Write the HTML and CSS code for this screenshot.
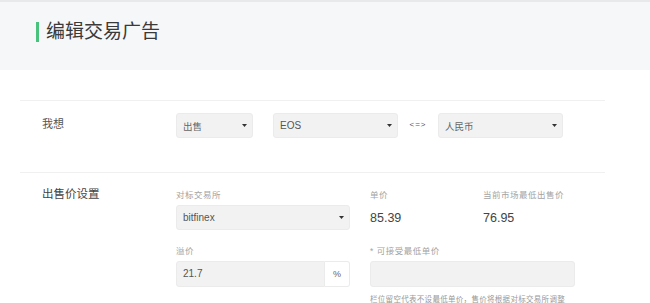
FILE: index.html
```html
<!DOCTYPE html>
<html lang="zh">
<head>
  <meta charset="UTF-8">
  <title>编辑交易广告</title>
  <link rel="stylesheet" href="styles.css">
</head>
<body>

  <div class="page-head">
    <h1 class="page-title">编辑交易广告</h1>
  </div>

  <div class="form">
    <!-- 我想 -->
    <div class="row row-want">
      <div class="row-label">我想</div>
      <div class="row-body inline">
        <div class="select sel-small">
          <span>出售</span>
          <svg class="caret" width="5" height="3" viewBox="0 0 5 3"><path d="M0 0h5L2.5 3z"/></svg>
        </div>
        <div class="select sel-wide">
          <span class="latin">EOS</span>
          <svg class="caret" width="5" height="3" viewBox="0 0 5 3"><path d="M0 0h5L2.5 3z"/></svg>
        </div>
        <span class="swap">&lt;=&gt;</span>
        <div class="select sel-wide">
          <span>人民币</span>
          <svg class="caret" width="5" height="3" viewBox="0 0 5 3"><path d="M0 0h5L2.5 3z"/></svg>
        </div>
      </div>
    </div>

    <!-- 出售价设置 -->
    <div class="row row-price">
      <div class="row-label">出售价设置</div>
      <div class="row-body grid">
        <div class="field">
          <div class="field-label">对标交易所</div>
          <div class="select sel-full">
            <span class="latin">bitfinex</span>
            <svg class="caret" width="5" height="3" viewBox="0 0 5 3"><path d="M0 0h5L2.5 3z"/></svg>
          </div>
        </div>
        <div class="field">
          <div class="field-label">单价</div>
          <div class="value">85.39</div>
        </div>
        <div class="field">
          <div class="field-label">当前市场最低出售价</div>
          <div class="value">76.95</div>
        </div>

        <div class="field">
          <div class="field-label">溢价</div>
          <div class="input-group">
            <div class="input latin">21.7</div>
            <div class="addon">%</div>
          </div>
        </div>
        <div class="field span2">
          <div class="field-label">* 可接受最低单价</div>
          <div class="input input-min"></div>
          <div class="hint">栏位留空代表不设最低单价，售价将根据对标交易所调整</div>
        </div>
      </div>
    </div>
  </div>

</body>
</html>
```

FILE: styles.css
```css
body {
  margin: 0;
  font-family: "Liberation Sans", "Noto Sans CJK SC", sans-serif;
  color: #333;
  background: #fff;
}

.page-head {
  border-top: 2px solid #e8e9eb;
  background: #f6f7f9;
  height: 70px;
  padding: 20px 0 0 36px;
  box-sizing: border-box;
}

.page-title {
  margin: 0;
  border-left: 3px solid #49c27d;
  padding-left: 7px;
  font-size: 19px;
  font-weight: normal;
  line-height: 20px;
  color: #3a3a3a;
}

.form {
  margin: 30px 0 0 20px;
  width: 585px;
}

.row {
  display: flex;
  align-items: flex-start;
  border-top: 1px solid #f0f0f0;
}

.row-want {
  height: 72px;
  padding-top: 12px;
  box-sizing: border-box;
}

.row-label {
  width: 156px;
  padding-left: 22px;
  box-sizing: border-box;
  font-size: 11px;
  line-height: 14px;
  color: #555;
}

.row-want .row-label {
  padding-top: 4px;
}

.row-price .row-label {
  margin-top: -2px;
  font-size: 11.5px;
  color: #444;
}

.inline {
  display: flex;
  align-items: center;
}

.select {
  height: 25px;
  box-sizing: border-box;
  background: #f2f2f2;
  border: 1px solid #ebebeb;
  border-radius: 3px;
  display: flex;
  align-items: center;
  justify-content: space-between;
  padding: 0 5px 0 6px;
  font-size: 9.5px;
  color: #666;
}

.select .latin {
  font-size: 10px;
  color: #555;
}

.caret {
  fill: #333;
}

.sel-small {
  width: 77px;
  margin-right: 20px;
}

.sel-wide {
  width: 125px;
}

.swap {
  width: 40px;
  text-align: center;
  font-size: 8px;
  color: #555;
  letter-spacing: 1px;
  padding-bottom: 3px;
}

.sel-full {
  width: 174px;
}

.row-price {
  padding-top: 16px;
}

.grid {
  display: grid;
  grid-template-columns: 174px 113px 92px;
  column-gap: 20px;
  row-gap: 14px;
}

.grid .field:nth-child(3) {
  margin-left: -20px;
}

.span2 {
  grid-column: span 2;
}

.field-label {
  font-size: 8.5px;
  line-height: 12px;
  color: #a3a3a3;
  margin-bottom: 4px;
  letter-spacing: 0.5px;
}

.value {
  height: 26px;
  line-height: 26px;
  font-size: 12.5px;
  color: #444;
}

.input-group {
  display: flex;
}

.input {
  height: 26px;
  box-sizing: border-box;
  background: #f2f2f2;
  border: 1px solid #ebebeb;
  border-radius: 3px 0 0 3px;
  padding-left: 6px;
  line-height: 24px;
  font-size: 10px;
  color: #555;
  width: 149px;
}

.addon {
  width: 25px;
  height: 26px;
  box-sizing: border-box;
  border: 1px solid #ebebeb;
  border-left: none;
  border-radius: 0 3px 3px 0;
  text-align: center;
  line-height: 24px;
  font-size: 9px;
  color: #666;
}

.input-min {
  width: 205px;
  border-radius: 3px;
}

.hint {
  margin-top: 6px;
  font-size: 7.5px;
  color: #999;
  letter-spacing: 0.3px;
}
```
